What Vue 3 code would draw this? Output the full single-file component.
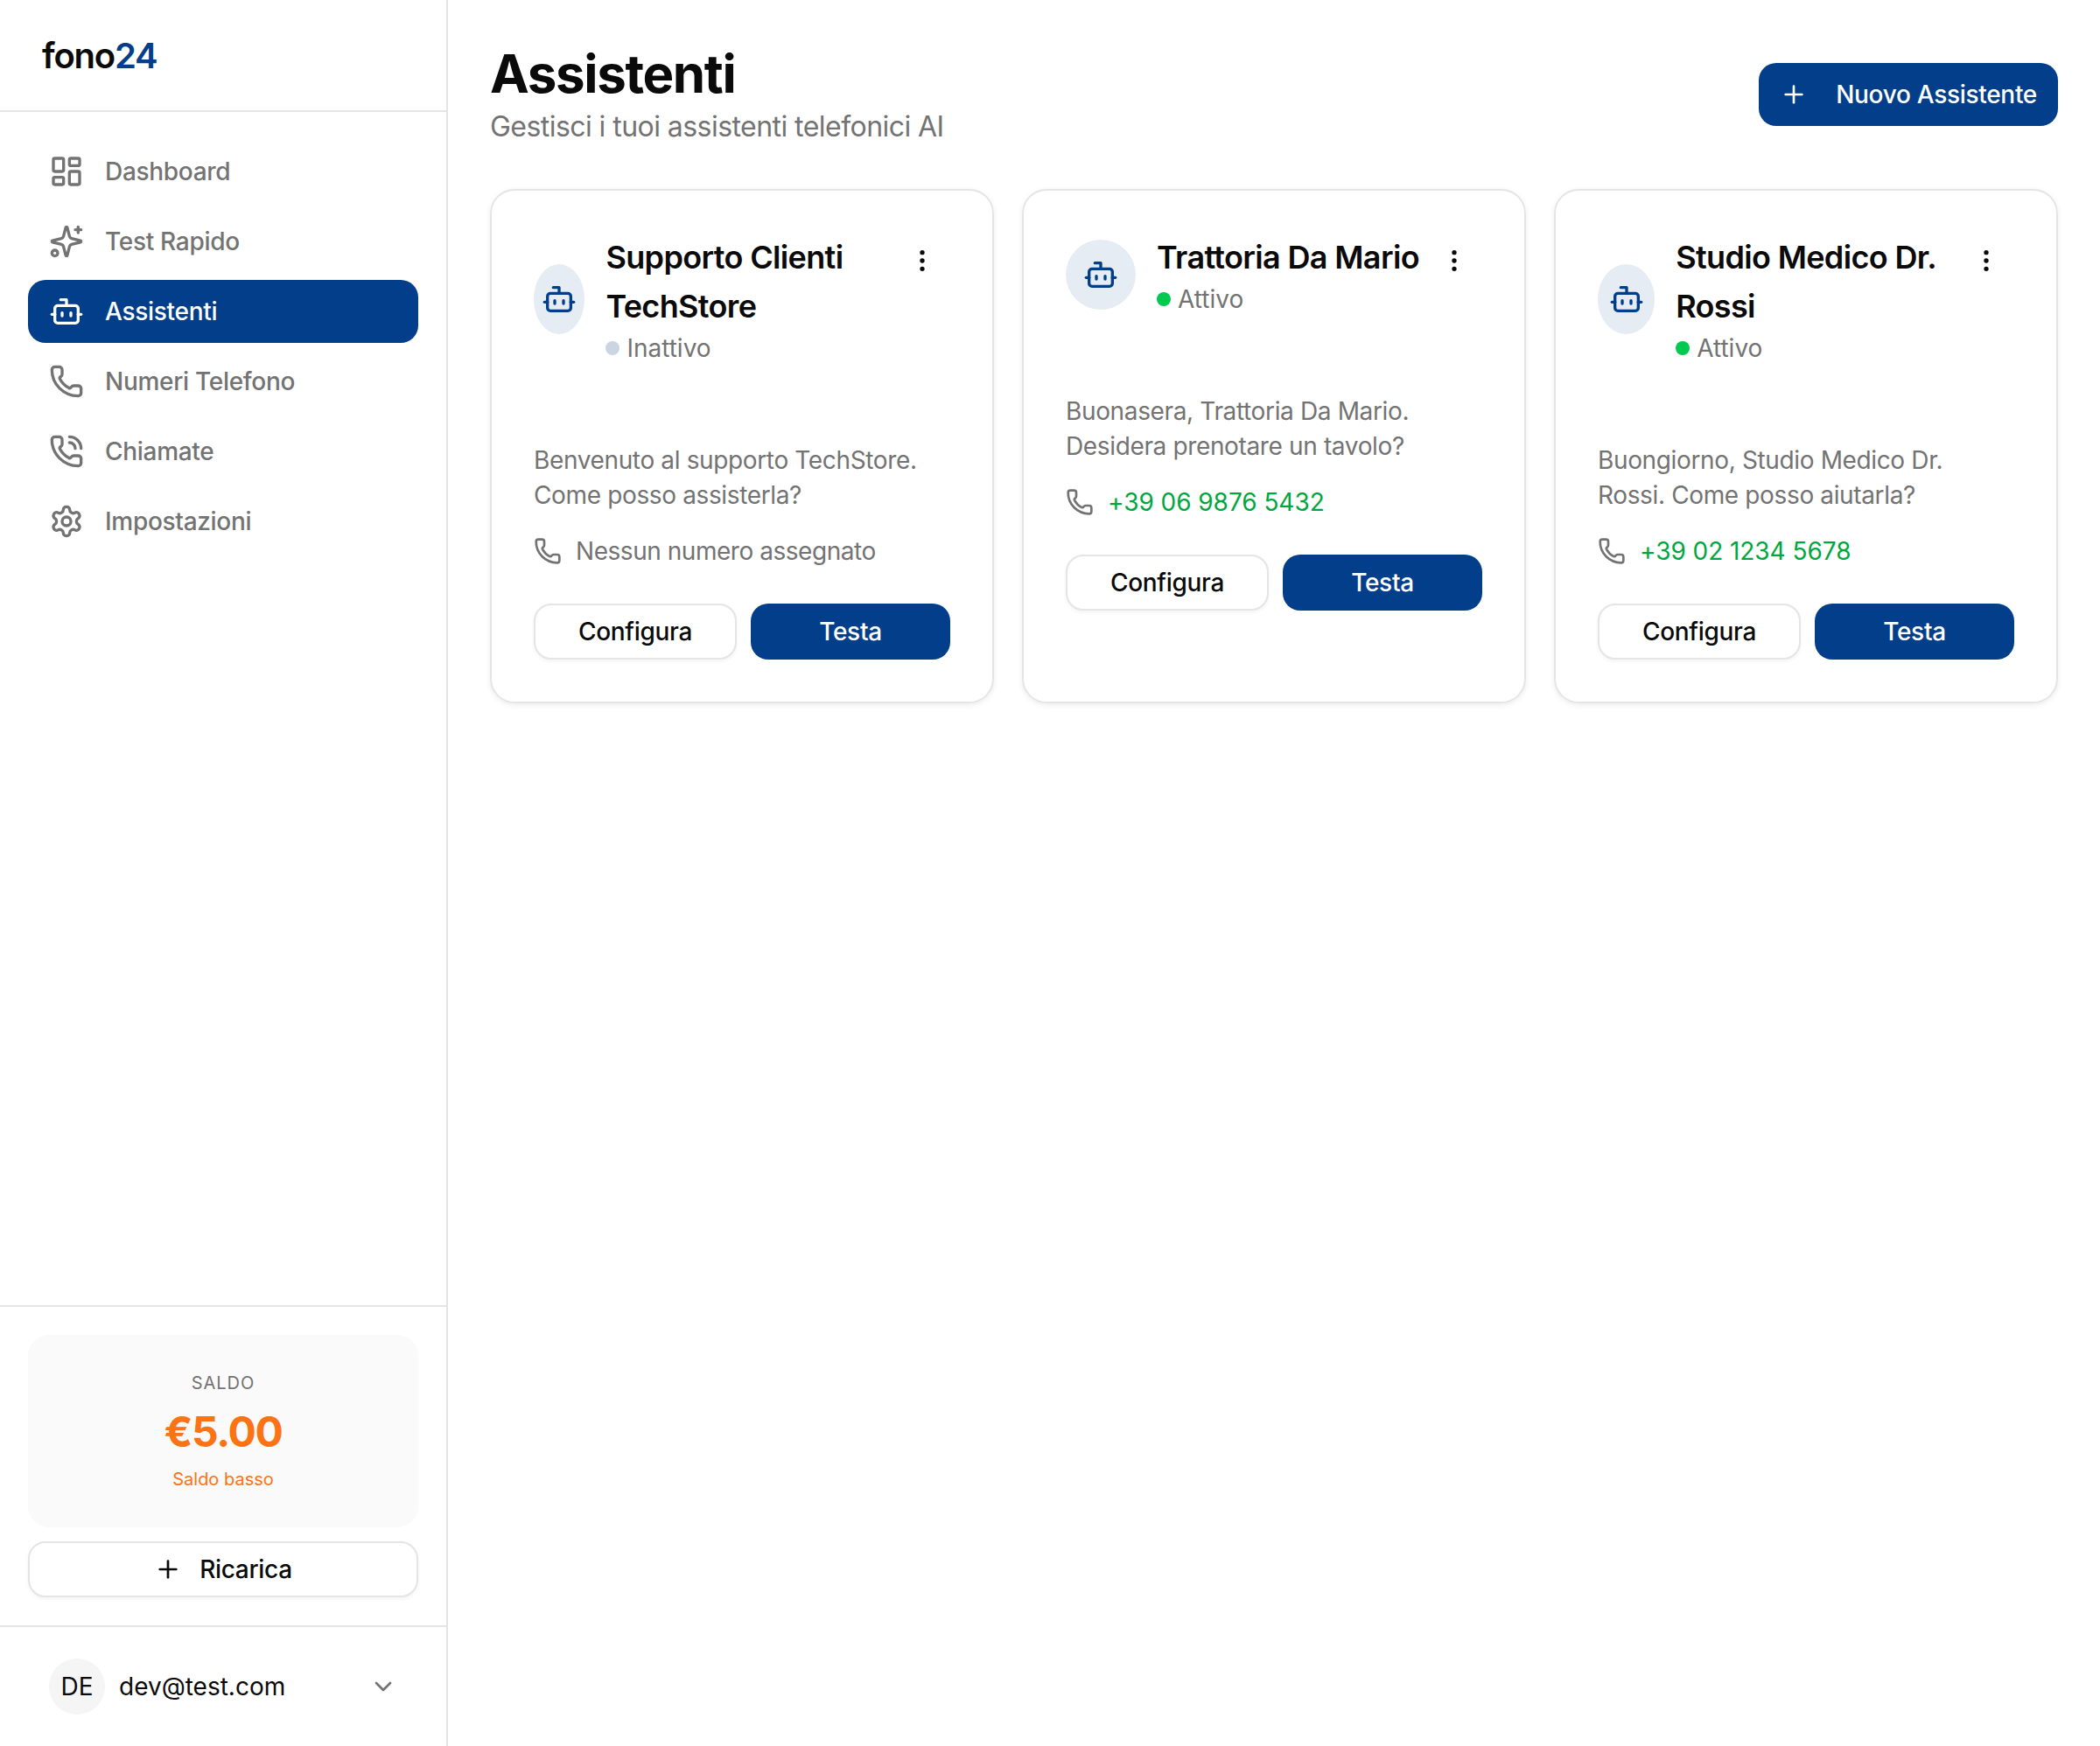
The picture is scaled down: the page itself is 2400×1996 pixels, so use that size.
<template>
  <div class="app">
    <aside class="sidebar">
      <div class="logo"><span>fono</span><span class="logoNum">24</span></div>

      <nav class="nav">
        <a v-for="item in navItems" :key="item.label" :class="['navItem', { active: item.active }]">
          <svg class="navIcon" viewBox="0 0 24 24">
            <path v-for="d in item.icon" :key="d" :d="d" />
          </svg>
          <span>{{ item.label }}</span>
        </a>
      </nav>

      <div class="balance">
        <div class="balanceCard">
          <div class="balanceLabel">SALDO</div>
          <div class="balanceAmount">€5.00</div>
          <div class="balanceNote">Saldo basso</div>
        </div>
        <button class="btn outline rechargeBtn">
          <svg class="btnIcon" viewBox="0 0 24 24"><path v-for="d in icons.plus" :key="d" :d="d" /></svg>
          <span>Ricarica</span>
        </button>
      </div>

      <div class="user">
        <div class="userAvatar">DE</div>
        <span class="userMail">dev@test.com</span>
        <svg class="chevron" viewBox="0 0 24 24"><path d="m6 9 6 6 6-6" /></svg>
      </div>
    </aside>

    <main class="main">
      <header class="pageHeader">
        <div>
          <h1>Assistenti</h1>
          <p class="subtitle">Gestisci i tuoi assistenti telefonici AI</p>
        </div>
        <button class="btn primary newBtn">
          <svg class="btnIcon" viewBox="0 0 24 24"><path v-for="d in icons.plus" :key="d" :d="d" /></svg>
          <span>Nuovo Assistente</span>
        </button>
      </header>

      <section class="cards">
        <article v-for="a in assistants" :key="a.name" class="card">
          <div class="cardHead">
            <div class="cardTitle">
              <div class="avatar">
                <svg class="avatarIcon" viewBox="0 0 24 24"><path v-for="d in icons.bot" :key="d" :d="d" /></svg>
              </div>
              <div class="cardInfo">
                <h3>{{ a.name }}</h3>
                <div class="status">
                  <span :class="['dot', { on: a.active }]"></span>
                  <span>{{ a.active ? 'Attivo' : 'Inattivo' }}</span>
                </div>
              </div>
            </div>
            <button class="moreBtn">
              <svg viewBox="0 0 24 24"><path v-for="d in icons.more" :key="d" :d="d" /></svg>
            </button>
          </div>

          <p class="greeting">{{ a.greeting }}</p>

          <div class="phoneRow">
            <svg class="phoneIcon" viewBox="0 0 24 24"><path v-for="d in icons.phone" :key="d" :d="d" /></svg>
            <span v-if="a.phone" class="hasNumber">{{ a.phone }}</span>
            <span v-else class="noNumber">Nessun numero assegnato</span>
          </div>

          <div class="cardActions">
            <button class="btn outline">Configura</button>
            <button class="btn primary">Testa</button>
          </div>
        </article>
      </section>
    </main>
  </div>
</template>

<script setup>
const phone = 'M13.832 16.568a1 1 0 0 0 1.213-.303l.355-.465A2 2 0 0 1 17 15h3a2 2 0 0 1 2 2v3a2 2 0 0 1-2 2A18 18 0 0 1 2 4a2 2 0 0 1 2-2h3a2 2 0 0 1 2 2v3a2 2 0 0 1-.8 1.6l-.468.351a1 1 0 0 0-.292 1.233 14 14 0 0 0 6.392 6.384'

const icons = {
  dashboard: [
    'M4 3h5a1 1 0 0 1 1 1v7a1 1 0 0 1-1 1H4a1 1 0 0 1-1-1V4a1 1 0 0 1 1-1z',
    'M15 3h5a1 1 0 0 1 1 1v3a1 1 0 0 1-1 1h-5a1 1 0 0 1-1-1V4a1 1 0 0 1 1-1z',
    'M15 12h5a1 1 0 0 1 1 1v7a1 1 0 0 1-1 1h-5a1 1 0 0 1-1-1v-7a1 1 0 0 1 1-1z',
    'M4 16h5a1 1 0 0 1 1 1v3a1 1 0 0 1-1 1H4a1 1 0 0 1-1-1v-3a1 1 0 0 1 1-1z'
  ],
  sparkles: [
    'M9.937 15.5A2 2 0 0 0 8.5 14.063l-6.135-1.582a.5.5 0 0 1 0-.962L8.5 9.936A2 2 0 0 0 9.937 8.5l1.582-6.135a.5.5 0 0 1 .963 0L14.063 8.5A2 2 0 0 0 15.5 9.937l6.135 1.581a.5.5 0 0 1 0 .964L15.5 14.063a2 2 0 0 0-1.437 1.437l-1.582 6.135a.5.5 0 0 1-.963 0z',
    'M20 2v4',
    'M22 4h-4',
    'M4 18a2 2 0 1 0 0 4 2 2 0 1 0 0-4z'
  ],
  bot: [
    'M12 8V4H8',
    'M6 8h12a2 2 0 0 1 2 2v8a2 2 0 0 1-2 2H6a2 2 0 0 1-2-2v-8a2 2 0 0 1 2-2z',
    'M2 14h2',
    'M20 14h2',
    'M15 13v2',
    'M9 13v2'
  ],
  phone: [phone],
  calls: [phone, 'M14 2a8 8 0 0 1 8 8', 'M14 6a4 4 0 0 1 4 4'],
  settings: [
    'M12.22 2h-.44a2 2 0 0 0-2 2v.18a2 2 0 0 1-1 1.73l-.43.25a2 2 0 0 1-2 0l-.15-.08a2 2 0 0 0-2.73.73l-.22.38a2 2 0 0 0 .73 2.73l.15.1a2 2 0 0 1 1 1.72v.51a2 2 0 0 1-1 1.74l-.15.09a2 2 0 0 0-.73 2.73l.22.38a2 2 0 0 0 2.73.73l.15-.08a2 2 0 0 1 2 0l.43.25a2 2 0 0 1 1 1.73V20a2 2 0 0 0 2 2h.44a2 2 0 0 0 2-2v-.18a2 2 0 0 1 1-1.73l.43-.25a2 2 0 0 1 2 0l.15.08a2 2 0 0 0 2.73-.73l.22-.39a2 2 0 0 0-.73-2.73l-.15-.08a2 2 0 0 1-1-1.74v-.5a2 2 0 0 1 1-1.74l.15-.09a2 2 0 0 0 .73-2.73l-.22-.38a2 2 0 0 0-2.73-.73l-.15.08a2 2 0 0 1-2 0l-.43-.25a2 2 0 0 1-1-1.73V4a2 2 0 0 0-2-2z',
    'M12 9a3 3 0 1 0 0 6 3 3 0 1 0 0-6z'
  ],
  plus: ['M5 12h14', 'M12 5v14'],
  more: [
    'M12 4a1 1 0 1 0 0 2 1 1 0 1 0 0-2z',
    'M12 11a1 1 0 1 0 0 2 1 1 0 1 0 0-2z',
    'M12 18a1 1 0 1 0 0 2 1 1 0 1 0 0-2z'
  ]
}

const navItems = [
  { label: 'Dashboard', icon: icons.dashboard },
  { label: 'Test Rapido', icon: icons.sparkles },
  { label: 'Assistenti', icon: icons.bot, active: true },
  { label: 'Numeri Telefono', icon: icons.phone },
  { label: 'Chiamate', icon: icons.calls },
  { label: 'Impostazioni', icon: icons.settings }
]

const assistants = [
  {
    name: 'Supporto Clienti TechStore',
    active: false,
    greeting: 'Benvenuto al supporto TechStore. Come posso assisterla?',
    phone: ''
  },
  {
    name: 'Trattoria Da Mario',
    active: true,
    greeting: 'Buonasera, Trattoria Da Mario. Desidera prenotare un tavolo?',
    phone: '+39 06 9876 5432'
  },
  {
    name: 'Studio Medico Dr. Rossi',
    active: true,
    greeting: 'Buongiorno, Studio Medico Dr. Rossi. Come posso aiutarla?',
    phone: '+39 02 1234 5678'
  }
]
</script>

<style scoped>
.app {
  display: flex;
  min-height: 100vh;
  background: #fff;
  color: #0a0a0a;
  font-family: Inter, "Liberation Sans", sans-serif;
  font-size: 28px;
  line-height: 40px;
}

svg {
  fill: none;
  stroke: currentColor;
  stroke-width: 2;
  stroke-linecap: round;
  stroke-linejoin: round;
  flex-shrink: 0;
}

/* sidebar */
.sidebar {
  width: 512px;
  flex-shrink: 0;
  box-sizing: border-box;
  border-right: 2px solid #e5e5e5;
  display: flex;
  flex-direction: column;
}

.logo {
  height: 128px;
  box-sizing: border-box;
  border-bottom: 2px solid #e5e5e5;
  padding: 2px 0 0 48px;
  display: flex;
  align-items: center;
  font-size: 40px;
  font-weight: 600;
  letter-spacing: -1.2px;
}

.logoNum {
  color: #023e8a;
}

.nav {
  flex: 1;
  padding: 32px;
  display: flex;
  flex-direction: column;
  gap: 8px;
}

.navItem {
  height: 72px;
  padding: 0 24px;
  border-radius: 20px;
  display: flex;
  align-items: center;
  gap: 24px;
  color: #737373;
  font-weight: 500;
  letter-spacing: -0.3px;
}

.navItem.active {
  background: #023e8a;
  color: #fff;
}

.navIcon {
  width: 40px;
  height: 40px;
}

.balance {
  border-top: 2px solid #e5e5e5;
  border-bottom: 2px solid #e5e5e5;
  padding: 32px;
  display: flex;
  flex-direction: column;
  gap: 16px;
}

.balanceCard {
  background: #fafafa;
  border-radius: 24px;
  padding: 40px 0;
  text-align: center;
}

.balanceLabel {
  font-size: 20px;
  line-height: 30px;
  letter-spacing: 0.05em;
  color: #737373;
}

.balanceAmount {
  margin-top: 9px;
  font-size: 48px;
  line-height: 64px;
  font-weight: 700;
  letter-spacing: -1.4px;
  color: #fb7314;
}

.balanceNote {
  margin-top: 7px;
  font-size: 20px;
  line-height: 30px;
  color: #fb7314;
}

.rechargeBtn {
  gap: 20px;
  flex: none;
  width: 100%;
}

.user {
  height: 136px;
  box-sizing: border-box;
  padding: 0 56px;
  display: flex;
  align-items: center;
  gap: 16px;
}

.userAvatar {
  width: 64px;
  height: 64px;
  border-radius: 50%;
  background: #f5f5f5;
  display: flex;
  align-items: center;
  justify-content: center;
  flex-shrink: 0;
}

.userMail {
  flex: 1;
}

.chevron {
  width: 32px;
  height: 32px;
  color: #737373;
}

/* main */
.main {
  flex: 1;
  min-width: 0;
  padding: 48px;
}

.pageHeader {
  display: flex;
  justify-content: space-between;
  align-items: center;
  margin-bottom: 48px;
}

h1 {
  margin: 0;
  font-size: 60px;
  line-height: 72px;
  font-weight: 700;
  letter-spacing: -1.35px;
}

.subtitle {
  margin: 0;
  padding-top: 2px;
  font-size: 32px;
  line-height: 46px;
  letter-spacing: -0.55px;
  color: #737373;
}

.btn {
  font: inherit;
  font-weight: 500;
  height: 64px;
  padding: 0 32px;
  border-radius: 20px;
  display: flex;
  align-items: center;
  justify-content: center;
  letter-spacing: -0.3px;
  cursor: pointer;
}

.btn.primary {
  background: #023e8a;
  color: #fff;
  border: none;
}

.btn.outline {
  background: #fff;
  color: #0a0a0a;
  border: 2px solid #e5e5e5;
  box-shadow: 0 2px 4px rgba(0, 0, 0, 0.05);
}

.btnIcon {
  width: 32px;
  height: 32px;
}

.newBtn {
  height: 72px;
  padding: 0 24px;
  gap: 32px;
}

.cards {
  display: grid;
  grid-template-columns: repeat(3, 1fr);
  gap: 32px;
}

.card {
  box-sizing: border-box;
  border: 2px solid #e5e5e5;
  border-radius: 28px;
  padding: 48px;
  box-shadow: 0 2px 6px rgba(0, 0, 0, 0.08);
}

.cardHead {
  display: flex;
  align-items: flex-start;
  justify-content: space-between;
  margin-bottom: 88px;
}

.cardTitle {
  flex: 1;
  min-width: 0;
  display: flex;
  align-items: center;
  gap: 24px;
}

.avatar {
  width: 80px;
  height: 80px;
  border-radius: 50%;
  background: #e6ecf3;
  color: #023e8a;
  display: flex;
  align-items: center;
  justify-content: center;
}

.avatarIcon {
  width: 40px;
  height: 40px;
}

.cardInfo {
  min-width: 0;
}

h3 {
  margin: 0;
  font-size: 36px;
  line-height: 56px;
  font-weight: 600;
  letter-spacing: -0.65px;
}

.status {
  display: flex;
  align-items: center;
  gap: 8px;
  color: #737373;
}

.dot {
  width: 16px;
  height: 16px;
  border-radius: 50%;
  background: #cbd5e1;
}

.dot.on {
  background: #00c950;
}

.moreBtn {
  width: 64px;
  height: 64px;
  flex-shrink: 0;
  padding: 0;
  border: none;
  background: none;
  color: #0a0a0a;
  display: flex;
  align-items: center;
  justify-content: center;
}

.moreBtn svg {
  width: 32px;
  height: 32px;
}

.greeting {
  margin: 0;
  color: #737373;
  letter-spacing: -0.36px;
}

.phoneRow {
  margin-top: 24px;
  display: flex;
  align-items: center;
  gap: 16px;
  color: #737373;
}

.phoneIcon {
  width: 32px;
  height: 32px;
}

.noNumber {
  letter-spacing: -0.46px;
}

.hasNumber {
  color: #00a63e;
  letter-spacing: -0.05px;
}

.cardActions {
  margin-top: 40px;
  display: flex;
  gap: 16px;
}

.cardActions .btn {
  flex: 1 1 0;
}
</style>
